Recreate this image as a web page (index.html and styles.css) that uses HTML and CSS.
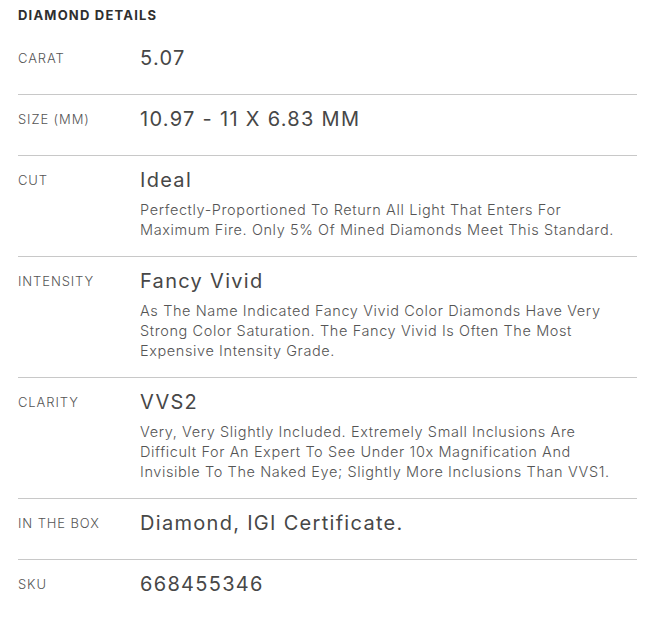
FILE: index.html
```html
<!DOCTYPE html>
<html>
<head>
<meta charset="utf-8">
<link rel="stylesheet" href="styles.css">
</head>
<body>
<section class="details">
  <h2 class="title">DIAMOND DETAILS</h2>
  <div class="row">
    <div class="label">CARAT</div>
    <div class="content"><div class="value">5.07</div></div>
  </div>
  <div class="row">
    <div class="label">SIZE (MM)</div>
    <div class="content"><div class="value">10.97 - 11 X 6.83 MM</div></div>
  </div>
  <div class="row">
    <div class="label">CUT</div>
    <div class="content">
      <div class="value">Ideal</div>
      <p class="desc">Perfectly-Proportioned To Return All Light That Enters For Maximum Fire. Only 5% Of Mined Diamonds Meet This Standard.</p>
    </div>
  </div>
  <div class="row">
    <div class="label">INTENSITY</div>
    <div class="content">
      <div class="value">Fancy Vivid</div>
      <p class="desc">As The Name Indicated Fancy Vivid Color Diamonds Have Very Strong Color Saturation. The Fancy Vivid Is Often The Most Expensive Intensity Grade.</p>
    </div>
  </div>
  <div class="row">
    <div class="label">CLARITY</div>
    <div class="content">
      <div class="value">VVS2</div>
      <p class="desc">Very, Very Slightly Included. Extremely Small Inclusions Are Difficult For An Expert To See Under 10x Magnification And Invisible To The Naked Eye; Slightly More Inclusions Than VVS1.</p>
    </div>
  </div>
  <div class="row">
    <div class="label">IN THE BOX</div>
    <div class="content"><div class="value">Diamond, IGI Certificate.</div></div>
  </div>
  <div class="row">
    <div class="label">SKU</div>
    <div class="content"><div class="value">668455346</div></div>
  </div>
</section>
</body>
</html>
```
FILE: styles.css
```css
html, body {
  margin: 0;
  padding: 0;
  background: #ffffff;
}
body {
  font-family: Inter, "Open Sans", sans-serif;
  color: #4a4a4a;
}
.details {
  width: 619px;
  margin-left: 18px;
  padding-top: 5px;
}
.title {
  margin: 0 0 9px 0;
  font-size: 13px;
  line-height: 20px;
  font-weight: 700;
  color: #2f2f2f;
  letter-spacing: 1.2px;
}
.row {
  display: flex;
  padding: 12px 0 16px 0;
  border-bottom: 1px solid #c8c8c8;
}
.row:last-child {
  border-bottom: none;
}
.label {
  width: 122px;
  flex: none;
  font-size: 13px;
  line-height: 24px;
  font-weight: 300;
  color: #555555;
  letter-spacing: 0.9px;
}
.content {
  flex: 1;
  min-width: 0;
}
.value {
  font-size: 20px;
  line-height: 24px;
  font-weight: 400;
  color: #474747;
  letter-spacing: 1.3px;
  margin-bottom: 8px;
}
.desc {
  margin: 0;
  font-size: 14.5px;
  line-height: 20px;
  font-weight: 300;
  color: #555555;
  max-width: 488px;
  letter-spacing: 0.6px;
}
```
